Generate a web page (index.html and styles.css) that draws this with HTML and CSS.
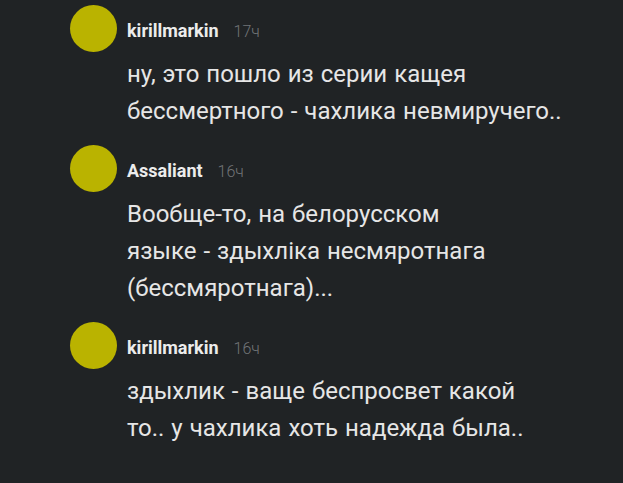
FILE: index.html
```html
<!DOCTYPE html>
<html lang="ru">
<head>
<meta charset="utf-8">
<link rel="stylesheet" href="styles.css">
</head>
<body>
<div class="thread">
  <div class="comment">
    <div class="avatar"></div>
    <div class="head"><span class="name">kirillmarkin</span><span class="time">17ч</span></div>
    <p class="text">ну, это пошло из серии кащея<br>бессмертного - чахлика невмиручего..</p>
  </div>
  <div class="comment">
    <div class="avatar"></div>
    <div class="head"><span class="name">Assaliant</span><span class="time">16ч</span></div>
    <p class="text">Вообще-то, на белорусском<br>языке - здыхліка несмяротнага<br>(бессмяротнага)...</p>
  </div>
  <div class="comment">
    <div class="avatar"></div>
    <div class="head"><span class="name">kirillmarkin</span><span class="time">16ч</span></div>
    <p class="text">здыхлик - ваще беспросвет какой<br>то.. у чахлика хоть надежда была..</p>
  </div>
</div>
</body>
</html>
```

FILE: styles.css
```css
html, body {
  margin: 0;
  padding: 0;
  background: #202325;
  height: 100%;
  overflow: hidden;
}
body {
  font-family: Roboto, "Noto Sans", sans-serif;
  color: #e6e6e6;
}
.thread {
  padding: 5px 0 0 70px;
  display: flex;
  flex-direction: column;
  gap: 15px;
}
.comment {
  display: grid;
  grid-template-columns: 47px 1fr;
  column-gap: 10px;
  align-items: center;
}
.avatar {
  width: 47px;
  height: 47px;
  border-radius: 50%;
  background: #bab300;
}
.head {
  display: flex;
  align-items: baseline;
  gap: 15px;
  padding-top: 4px;
}
.name {
  font-weight: 700;
  font-size: 18px;
  color: #ececec;
}
.time {
  font-weight: 300;
  font-size: 16px;
  color: #727578;
}
.text {
  grid-column: 2;
  margin: 4px 0 0;
  font-size: 24px;
  line-height: 37px;
  white-space: nowrap;
  word-spacing: 1px;
}
```
